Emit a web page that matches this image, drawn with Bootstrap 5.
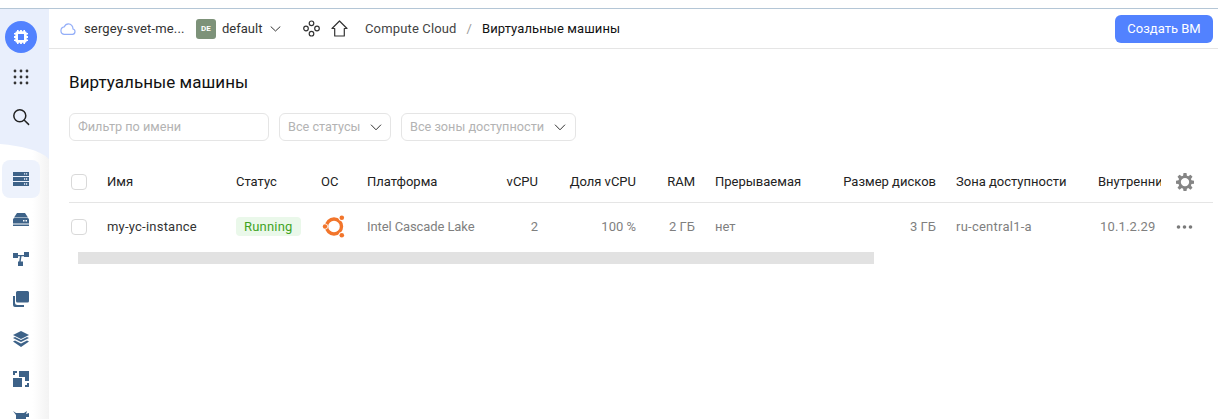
<!DOCTYPE html>
<html lang="ru">
<head>
<meta charset="utf-8">
<title>Виртуальные машины</title>
<link href="https://cdn.jsdelivr.net/npm/bootstrap@5.3.0/dist/css/bootstrap.min.css" rel="stylesheet">
<style>
html,body{height:419px;overflow:hidden;background:#fff;}
body{font-family:Roboto,"Liberation Sans",sans-serif;font-size:13px;color:#222;}
.shell{margin-top:8px;border-top:1px solid #b4c6d6;height:411px;}
.rail{width:49px;flex:none;position:relative;background:linear-gradient(90deg,#fff 0,#fff 66%,#f3f3f3 100%);overflow:hidden;}
.rail-bg{position:absolute;left:0;top:0;z-index:0;}
.rail-inner{position:relative;z-index:1;width:42px;}
.rail-logo{width:32px;height:32px;border-radius:50%;background:#5282ff;margin:12px 0 0 5px;}
.rail-btn{height:40px;margin-left:2px;width:38px;}
.rail-top{margin-top:4px;}
.rail-sep{height:23px;}
.rail-item{height:40px;margin-left:2px;width:38px;border-radius:8px;}
.rail-item.on{background:#edf2fc;height:38px;margin-bottom:1px;}
.rail-item svg{fill:#3d6288;}
.top-bar{height:40px;border-bottom:1px solid #e5e5e5;padding:0 5px 0 11px;white-space:nowrap;}
.acct{width:127px;letter-spacing:.15px;}
.org-name{color:#333;}
.dflt{margin-left:9px;width:107px;}
.dflt-name{margin:0 8px 0 6px;color:#333;}
.fold{width:20px;height:20px;border-radius:3px;background:#7d9279;color:#fff;font-size:8px;font-weight:700;letter-spacing:.2px;}
.home-ic{margin-left:11px;}
.crumb-a{margin-left:17px;color:#444;letter-spacing:.15px;}
.crumb-b{color:#111;letter-spacing:.1px;}
.crumb-sep{color:#9a9a9a;margin:0 10px;}
.make-btn{height:28px;width:98px;padding:0;background:#5282ff;border:0;border-radius:6px;color:#fff;font-size:13px;}
.ttl{font-size:17px;font-weight:400;margin:23px 0 0 0;line-height:20px;color:#111;letter-spacing:.05px;}
.pane{padding:0 5px 0 20px;min-width:0;}
.main-col{min-width:0;}
.filters{margin-top:21px;gap:10px;}
.filt{height:28px;border:1px solid #e5e5e5;border-radius:6px;color:#b3b3b3;padding:0 8px;background:#fff;white-space:nowrap;font-size:12.7px;}
.filt-a{width:200px;}
.filt-b{width:112px;}
.filt-c{width:175px;padding-right:9px;}
.vm-grid{table-layout:fixed;border-collapse:collapse;width:1144px;margin-top:21px;}
.vm-grid th{font-weight:400;height:40px;color:#222;border-bottom:1px solid #e5e5e5;padding:0;white-space:nowrap;overflow:hidden;vertical-align:middle;}
.vm-grid td{height:49px;color:#7f7f7f;padding:0;white-space:nowrap;vertical-align:middle;}
.vm-grid .name-cell{color:#333;letter-spacing:.22px;}
.vm-grid .plat-cell{letter-spacing:-.1px;}
.vm-grid .zone-cell{letter-spacing:.25px;}
.vm-grid .ip-cell{padding-left:2px;letter-spacing:.15px;}
.vm-grid .ar{text-align:right;padding-right:20px;}
.box{display:block;width:16px;height:16px;border:1px solid #d9d9d9;border-radius:4px;margin-left:2px;}
.run-tag{display:inline-block;height:19px;line-height:19px;padding:0 8px;border-radius:4px;background:#eaf8ea;color:#3fa31f;letter-spacing:.2px;}
.os-ic{display:block;margin-left:1px;}
.act-ic{display:block;margin-left:15px;}
.gear-ic{display:block;margin-left:15px;}
.track{height:12px;width:796px;background:#e2e2e2;margin:1px 0 0 9px;}
</style>
</head>
<body>
<div class="shell d-flex">
  <aside class="rail">
    <svg class="rail-bg" width="49" height="160" viewBox="0 0 49 160"><path d="M0 0H49V150C40 141 22 137 0 135Z" fill="#e9effc"/></svg>
    <div class="rail-inner">
      <div class="rail-logo d-flex align-items-center justify-content-center">
        <svg width="16" height="16" viewBox="0 0 16 16"><path fill="#fff" fill-rule="evenodd" d="M4 1h1.600v1.200h1.500V1h1.800v1.200h1.500V1H12v1.300a1.800 1.800 0 0 1 1.700 1.700H15v1.600h-1.300v1.500H15v1.800h-1.300v1.500H15V12h-1.300a1.800 1.800 0 0 1-1.700 1.700V15h-1.600v-1.300H8.900V15H7.100v-1.300H5.600V15H4v-1.300A1.800 1.800 0 0 1 2.300 12H1v-1.600h1.300V8.900H1V7.100h1.300V5.600H1V4h1.300A1.800 1.800 0 0 1 4 2.300ZM5 5v6h6V5Z"/></svg>
      </div>
      <div class="rail-btn rail-top d-flex align-items-center justify-content-center">
        <svg width="16" height="16" viewBox="0 0 16 16" fill="#333"><circle cx="2" cy="2" r="1.400"/><circle cx="8" cy="2" r="1.400"/><circle cx="14" cy="2" r="1.400"/><circle cx="2" cy="8" r="1.400"/><circle cx="8" cy="8" r="1.400"/><circle cx="14" cy="8" r="1.400"/><circle cx="2" cy="14" r="1.400"/><circle cx="8" cy="14" r="1.400"/><circle cx="14" cy="14" r="1.400"/></svg>
      </div>
      <div class="rail-btn d-flex align-items-center justify-content-center">
        <svg width="18" height="18" viewBox="0 0 18 18" fill="none" stroke="#222" stroke-width="1.500" stroke-linecap="round"><circle cx="7.800" cy="7.800" r="6"/><path d="M12.300 12.300 16.600 16.400"/></svg>
      </div>
      <div class="rail-sep"></div>
      <div class="rail-item on d-flex align-items-center justify-content-center">
        <svg width="16" height="14" viewBox="0 0 16 14"><path fill-rule="evenodd" d="M0 0h16v4H0ZM11 1.200v1.400h1.200V1.200ZM13 1.200v1.400h1.200V1.200ZM0 5h16v4H0ZM11 6.300v1.400h1.200V6.300ZM13 6.300v1.400h1.200V6.300ZM0 10h16v4H0ZM11 11.300v1.400h1.200v-1.400ZM13 11.300v1.400h1.200v-1.400Z"/></svg>
      </div>
      <div class="rail-item d-flex align-items-center justify-content-center">
        <svg width="16" height="13" viewBox="0 0 16 13"><path fill-rule="evenodd" d="M4 0h8l3 4.500H1ZM1.500 5h13A1.500 1.500 0 0 1 16 6.500V10.500H0V6.500A1.500 1.500 0 0 1 1.500 5ZM10 7v1.500h1.500V7ZM12.500 7v1.500H14V7ZM0 11.500h16V13H0Z"/></svg>
      </div>
      <div class="rail-item d-flex align-items-center justify-content-center">
        <svg width="16" height="14" viewBox="0 0 16 14"><path d="M0 1h5v2h6V0h5v5h-5V4.300H8.500l-.8 5.200H10V14H5V9.500h1.200l.8-5.200H5V6H0Z"/></svg>
      </div>
      <div class="rail-item d-flex align-items-center justify-content-center">
        <svg width="16" height="16" viewBox="0 0 16 16"><path d="M4.500 0H14.500A1.500 1.500 0 0 1 16 1.500V10A1.500 1.500 0 0 1 14.500 11.500H4.500A1.500 1.500 0 0 1 3 10V1.500A1.500 1.500 0 0 1 4.500 0ZM0 5h2v6.500A2.500 2.500 0 0 0 4.500 14H11V16H2A2 2 0 0 1 0 14Z"/></svg>
      </div>
      <div class="rail-item d-flex align-items-center justify-content-center">
        <svg width="16" height="16" viewBox="0 0 16 16"><path d="M8 0 16 4 8 8 0 4ZM0 7 2 6 8 9 14 6 16 7 8 11ZM0 10.500 2 9.500 8 12.500 14 9.500 16 10.500 8 16Z"/></svg>
      </div>
      <div class="rail-item d-flex align-items-center justify-content-center">
        <svg width="16" height="16" viewBox="0 0 16 16"><path d="M0 7h9v9H0ZM6 0h10v10h-4V6H6ZM0 0h4v2H2v2H0ZM16 12v4h-4v-2h2v-2Z"/></svg>
      </div>
      <div class="rail-item d-flex align-items-center justify-content-center">
        <svg width="16" height="16" viewBox="0 0 16 16"><path d="M0 0 3 2H11L14 0 13 3 16 2V6H13V10H3V4Z"/></svg>
      </div>
    </div>
  </aside>
  <main class="main-col flex-grow-1 d-flex flex-column">
    <header class="top-bar d-flex align-items-center">
      <div class="acct d-flex align-items-center gap-2">
        <svg width="16" height="12" viewBox="0 0 16 12" fill="none" stroke="#93aef8" stroke-width="1.200"><path d="M4 11.300H12.500A2.700 2.700 0 0 0 13 6C13 3 11 .8 8.500 .8 6.500 .8 5 2 4.300 3.800A3.800 3.800 0 0 0 4 11.300Z"/></svg>
        <span class="org-name text-truncate">sergey-svet-me...</span>
      </div>
      <div class="dflt d-flex align-items-center">
        <span class="fold d-flex align-items-center justify-content-center">DE</span>
        <span class="dflt-name">default</span>
        <svg width="11" height="6" viewBox="0 0 11 6" fill="none" stroke="#333"><path d="M.7 .5 5.500 5 10.300 .5"/></svg>
      </div>
      <svg width="17" height="17" viewBox="0 0 17 17" fill="none" stroke="#333" stroke-width="1.200"><circle cx="8.500" cy="3.300" r="2.300"/><circle cx="3" cy="8.500" r="2.300"/><circle cx="14" cy="8.500" r="2.300"/><circle cx="8.500" cy="13.700" r="2.300"/></svg>
      <svg class="home-ic" width="17" height="17" viewBox="0 0 17 17" fill="none" stroke="#333" stroke-width="1.200"><path d="M8.500 1 1 8.500H3.700V16H13.300V8.500H16Z" stroke-linejoin="round"/></svg>
      <span class="crumb-a">Compute Cloud</span>
      <span class="crumb-sep">/</span>
      <span class="crumb-b">Виртуальные машины</span>
      <button class="make-btn ms-auto" type="button">Создать ВМ</button>
    </header>
    <section class="pane">
      <h1 class="ttl">Виртуальные машины</h1>
      <div class="filters d-flex">
        <div class="filt filt-a d-flex align-items-center">Фильтр по имени</div>
        <div class="filt filt-b d-flex align-items-center justify-content-between">Все статусы<svg width="12" height="7" viewBox="0 0 12 7" fill="none" stroke="#333"><path d="M1 .7 6 5.800 11 .7"/></svg></div>
        <div class="filt filt-c d-flex align-items-center justify-content-between">Все зоны доступности<svg width="12" height="7" viewBox="0 0 12 7" fill="none" stroke="#333"><path d="M1 .7 6 5.800 11 .7"/></svg></div>
      </div>
      <table class="vm-grid">
        <colgroup><col style="width:38px"><col style="width:129px"><col style="width:85px"><col style="width:46px"><col style="width:123px"><col style="width:68px"><col style="width:98px"><col style="width:59px"><col style="width:101px"><col style="width:140px"><col style="width:142px"><col style="width:63px"><col style="width:52px"></colgroup>
        <thead>
          <tr>
            <th><span class="box"></span></th>
            <th>Имя</th><th>Статус</th><th>ОС</th><th>Платформа</th>
            <th class="ar">vCPU</th><th class="ar">Доля vCPU</th><th class="ar">RAM</th>
            <th>Прерываемая</th><th class="ar">Размер дисков</th><th>Зона доступности</th><th>Внутренний IP</th>
            <th><svg class="gear-ic" width="18" height="18" viewBox="0 0 18 18" fill="#858585"><path fill-rule="evenodd" d="M7.500 0h3l.4 2.700 1.400.6L14.500 1.700l2 2-1.600 2.200.6 1.400 2.500.4v3l-2.500.4-.6 1.400 1.600 2.200-2 2-2.200-1.600-1.400.6-.4 2.300h-3l-.4-2.300-1.400-.6-2.200 1.600-2-2 1.600-2.200-.6-1.400L0 10.700v-3l2.500-.4.6-1.400L1.500 3.700l2-2 2.200 1.600 1.400-.6ZM9 4.900a4.200 4.200 0 1 0 0 8.400 4.200 4.200 0 0 0 0-8.400Z"/></svg></th>
          </tr>
        </thead>
        <tbody>
          <tr>
            <td><span class="box"></span></td>
            <td class="name-cell">my-yc-instance</td>
            <td><span class="run-tag">Running</span></td>
            <td><svg class="os-ic" width="25" height="25" viewBox="0 0 25 25"><circle cx="12" cy="12.500" r="7.500" fill="none" stroke="#f2752b" stroke-width="3.400"/><circle cx="3" cy="12.500" r="2.900" fill="#fff"/><circle cx="19.800" cy="3.800" r="3.200" fill="#fff"/><circle cx="19.800" cy="21.200" r="3.200" fill="#fff"/><circle cx="3" cy="12.500" r="2.200" fill="#f2752b"/><circle cx="19.800" cy="3.800" r="2.300" fill="#f2752b"/><circle cx="19.800" cy="21.200" r="2.300" fill="#f2752b"/></svg></td>
            <td class="plat-cell">Intel Cascade Lake</td>
            <td class="ar">2</td><td class="ar">100 %</td><td class="ar">2 ГБ</td>
            <td>нет</td><td class="ar">3 ГБ</td><td class="zone-cell">ru-central1-a</td>
            <td class="ip-cell">10.1.2.29</td>
            <td><svg class="act-ic" width="17" height="4" viewBox="0 0 17 4" fill="#7a7a7a"><circle cx="2.500" cy="2" r="1.800"/><circle cx="8.500" cy="2" r="1.800"/><circle cx="14.500" cy="2" r="1.800"/></svg></td>
          </tr>
        </tbody>
      </table>
      <div class="track"></div>
    </section>
  </main>
</div>
<script src="https://cdn.jsdelivr.net/npm/bootstrap@5.3.0/dist/js/bootstrap.bundle.min.js"></script>
</body>
</html>
